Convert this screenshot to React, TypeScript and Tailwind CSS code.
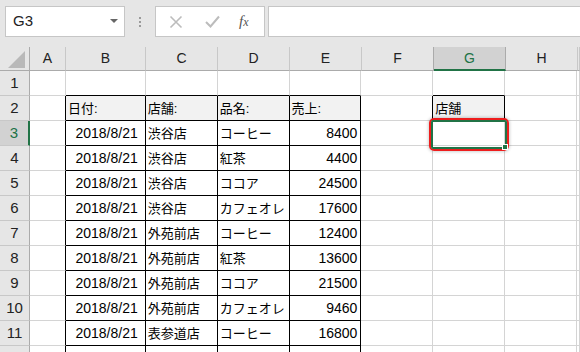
import React from "react";

const W = [
  "w-[30px]",
  "w-[36px]",
  "w-[80px]",
  "w-[72px]",
  "w-[72px]",
  "w-[72px]",
  "w-[72px]",
  "w-[72px]",
  "w-[72px]",
  "flex-1",
];
const LETTERS = ["", "A", "B", "C", "D", "E", "F", "G", "H", ""];

type Row = { date?: string; store?: string; item?: string; amount?: string };

const DATA: Row[] = [
  { date: "2018/8/21", store: "渋谷店", item: "コーヒー", amount: "8400" },
  { date: "2018/8/21", store: "渋谷店", item: "紅茶", amount: "4400" },
  { date: "2018/8/21", store: "渋谷店", item: "ココア", amount: "24500" },
  { date: "2018/8/21", store: "渋谷店", item: "カフェオレ", amount: "17600" },
  { date: "2018/8/21", store: "外苑前店", item: "コーヒー", amount: "12400" },
  { date: "2018/8/21", store: "外苑前店", item: "紅茶", amount: "13600" },
  { date: "2018/8/21", store: "外苑前店", item: "ココア", amount: "21500" },
  { date: "2018/8/21", store: "外苑前店", item: "カフェオレ", amount: "9460" },
  { date: "2018/8/21", store: "表参道店", item: "コーヒー", amount: "16800" },
  { date: "2018/8/21", store: "表参道店", item: "紅茶", amount: "4800" },
];

const FONT = "font-['Liberation_Sans','Noto_Sans_CJK_JP',sans-serif]";

function cellText(r: number, c: number): { text: string; kind: "num" | "date" | "jp" } | null {
  if (r === 2) {
    const h: Record<number, string> = { 2: "日付:", 3: "店舗:", 4: "品名:", 5: "売上:", 7: "店舗" };
    if (h[c]) return { text: h[c], kind: "jp" };
    return null;
  }
  if (r >= 3) {
    const d = DATA[r - 3];
    if (!d) return null;
    if (c === 2) return { text: d.date!, kind: "date" };
    if (c === 3) return { text: d.store!, kind: "jp" };
    if (c === 4) return { text: d.item!, kind: "jp" };
    if (c === 5) return { text: d.amount!, kind: "num" };
  }
  return null;
}

function inTable(r: number, c: number) {
  return (r >= 2 && c >= 2 && c <= 5) || (r === 2 && c === 7);
}

function Cell({ r, c }: { r: number; c: number }) {
  const t = cellText(r, c);
  const table = inTable(r, c);
  const rightBlack = table || inTable(r, c + 1);
  const bottomBlack = table || inTable(r + 1, c);
  const headerBg = r === 2 && table;
  const isSel = r === 3 && c === 7;

  let align = "justify-start pl-[2px]";
  let size = "text-[13px]";
  if (t?.kind === "date") {
    align = "justify-end pr-[7px]";
    size = "text-[14px]";
  } else if (t?.kind === "num") {
    align = "justify-end pr-[3px]";
    size = "text-[14px]";
  }

  return (
    <div
      className={`${W[c]} relative h-full flex items-center border-r border-b ${
        rightBlack ? "border-r-black" : "border-r-[#d4d4d4]"
      } ${bottomBlack ? "border-b-black" : "border-b-[#d4d4d4]"} ${
        headerBg ? "bg-[#f2f2f2]" : "bg-white"
      } ${align} ${size} text-black whitespace-nowrap`}
    >
      {t && <span className="leading-none">{t.text}</span>}
      {isSel && (
        <div className="absolute left-[-4px] top-[-3px] w-[80px] h-[33px] rounded-[5px] border-2 border-[#ee1d1d] shadow-[0_0_3px_1px_rgba(0,0,0,0.18)] z-10">
          <div className="relative w-full h-full border-2 border-[#217346] rounded-[2px]">
            <div className="absolute right-[-3px] bottom-[-3px] w-[6px] h-[6px] bg-[#217346] border border-white" />
          </div>
        </div>
      )}
    </div>
  );
}

export default function App() {
  const rows = Array.from({ length: 12 }, (_, i) => i + 1);
  return (
    <div className={`w-[580px] h-[352px] overflow-hidden bg-[#e6e6e6] ${FONT}`}>
      {/* Formula bar */}
      <div className="h-[47px] flex items-start pt-[6px] pl-[5px]">
        <div className="w-[120px] h-[31px] bg-white border border-[#c6c6c6] flex items-center justify-between pl-[7px] pr-[6px]">
          <span className="text-[15px] text-[#222]">G3</span>
          <svg width="8" height="5" viewBox="0 0 8 5">
            <path d="M0 0 L8 0 L4 4 Z" fill="#666" />
          </svg>
        </div>
        <div className="w-[30px] h-[31px] flex flex-col items-center justify-center gap-[2px]">
          <div className="w-[2px] h-[2px] bg-[#9a9a9a]" />
          <div className="w-[2px] h-[2px] bg-[#9a9a9a]" />
          <div className="w-[2px] h-[2px] bg-[#9a9a9a]" />
        </div>
        <div className="w-[110px] h-[31px] bg-white border border-[#c6c6c6] flex items-center pl-[12px]">
          <svg width="14" height="14" viewBox="0 0 14 14" className="ml-[1px]">
            <path d="M1.5 1.5 L12.5 12.5 M12.5 1.5 L1.5 12.5" stroke="#bcbcbc" strokeWidth="1.6" />
          </svg>
          <svg width="15" height="13" viewBox="0 0 15 13" className="ml-[22px]">
            <path d="M1 7 L5.5 11.5 L14 1.5" stroke="#bcbcbc" strokeWidth="2" fill="none" />
          </svg>
          <span className="ml-[19px] font-['Liberation_Serif',serif] italic text-[15px] text-[#555] leading-none">
            f<span className="text-[12px]">x</span>
          </span>
        </div>
        <div className="flex-1 ml-[3px] h-[31px] bg-white border border-[#c6c6c6] border-r-0" />
      </div>

      {/* Column headers */}
      <div className="flex h-[24px]">
        {LETTERS.map((l, c) => {
          if (c === 0) {
            return (
              <div
                key={c}
                className={`${W[c]} h-full relative border-r border-b border-r-[#ababab] border-b-[#ababab]`}
              >
                <svg width="18" height="18" viewBox="0 0 18 18" className="absolute left-[8px] top-[4px]">
                  <path d="M17 0 L17 17 L0 17 Z" fill="#b9b9b9" />
                </svg>
              </div>
            );
          }
          const sel = c === 7;
          return (
            <div
              key={c}
              className={`${W[c]} h-full flex items-center justify-center text-[14px] border-r ${
                sel
                  ? "bg-[#d2d2d2] text-[#217346] border-b-2 border-b-[#217346] border-r-[#ababab]"
                  : "text-[#222] border-b border-b-[#ababab] " +
                    (c === 6 ? "border-r-[#ababab]" : "border-r-[#c8c8c8]")
              }`}
            >
              {l}
            </div>
          );
        })}
      </div>

      {/* Grid rows */}
      {rows.map((r) => (
        <div key={r} className="flex h-[25px]">
          <div
            className={`${W[0]} h-full flex items-center justify-center text-[15px] border-b border-b-[#c8c8c8] ${
              r === 3
                ? "bg-[#d2d2d2] text-[#217346] border-r-2 border-r-[#217346]"
                : "bg-[#e6e6e6] text-[#222] border-r border-r-[#ababab]"
            }`}
          >
            {r}
          </div>
          {[1, 2, 3, 4, 5, 6, 7, 8, 9].map((c) => (
            <Cell key={c} r={r} c={c} />
          ))}
        </div>
      ))}
    </div>
  );
}
